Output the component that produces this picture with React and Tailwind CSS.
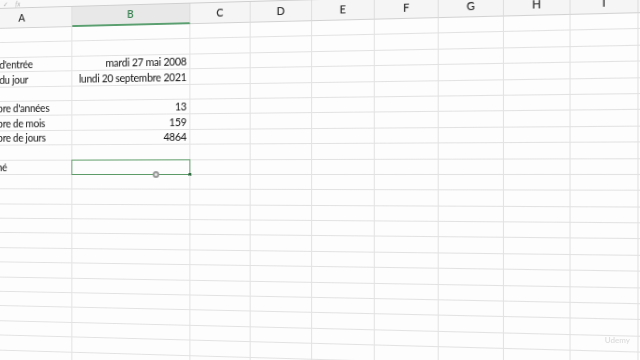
import React from "react";

const cols = [
  { id: "A", w: "w-[111px]" },
  { id: "B", w: "w-[127px]" },
  { id: "C", w: "w-[63px]" },
  { id: "D", w: "w-[63px]" },
  { id: "E", w: "w-[63px]" },
  { id: "F", w: "w-[63px]" },
  { id: "G", w: "w-[63px]" },
  { id: "H", w: "w-[63px]" },
  { id: "I", w: "w-[63px]" },
  { id: "J", w: "w-[63px]" },
];

const data = [
  ["", ""],
  ["", ""],
  ["Date d'entrée", "mardi 27 mai 2008"],
  ["Date du jour", "lundi 20 septembre 2021"],
  ["", ""],
  ["Nombre d'années", "13"],
  ["Nombre de mois", "159"],
  ["Nombre de jours", "4864"],
  ["", ""],
  ["Jour né", "", true],
];

const rows = [...data, ...Array.from({ length: 15 }, () => ["", ""])];

const Row = ({ label, value, selected }) => (
  <div className="flex h-[15.4px]">
    <div className="w-[111px] shrink-0 border-r border-b border-[#e2e2e2] pl-[5px] pb-[1px] flex items-end whitespace-nowrap text-[11px] leading-[12px] tracking-[-0.25px] text-[#111]">
      {label}
    </div>
    <div className="relative w-[127px] shrink-0 border-r border-b border-[#e2e2e2] pr-[3px] pb-[1px] flex items-end justify-end whitespace-nowrap text-[11px] leading-[12px] tracking-[-0.25px] text-[#111]">
      {value}
      {selected && (
        <>
          <div className="absolute -left-px -top-px -right-px -bottom-px border-[1.5px] border-[#5a9a65]" />
          <div className="absolute right-[-2px] bottom-[-2px] w-[3px] h-[3px] bg-[#2e6b40]" />
          <div className="absolute left-[87px] bottom-[-4px] w-[7px] h-[7px] rounded-full border-2 border-[#9a9a9a] bg-[#e8e8e8]" />
        </>
      )}
    </div>
    {cols.slice(2).map((c) => (
      <div key={c.id} className={`${c.w} shrink-0 border-r border-b border-[#e2e2e2]`} />
    ))}
  </div>
);

export default function App() {
  return (
    <div className="relative w-[640px] h-[360px] overflow-hidden bg-[#fdfdfd] [font-family:Lato,'Liberation_Sans',sans-serif]">
      <div className="-ml-[52px] -mt-[9px] w-[742px] origin-[372px_184px] [transform:perspective(1000px)_rotateY(-9deg)]">
        <div className="h-[9px] flex items-center gap-[8px] pl-[34px] bg-[#f8f8f8] border-b border-[#cfcfcf] text-[7px] text-[#b5b5b5]">
          <span>✓</span>
          <span className="italic">fx</span>
        </div>
        <div className="flex h-[21px] bg-[#f5f5f5]">
          {cols.map((c) =>
            c.id === "B" ? (
              <div
                key={c.id}
                className={`${c.w} shrink-0 flex items-center justify-center bg-[#e8e8e8] border-r border-[#dadada] border-b-2 border-b-[#5a9f6f] text-[11px] font-semibold text-[#2f7d4a]`}
              >
                {c.id}
              </div>
            ) : (
              <div
                key={c.id}
                className={`${c.w} shrink-0 flex items-center justify-center border-r border-[#dedede] border-b border-b-[#d2d2d2] text-[11px] font-semibold text-[#333]`}
              >
                {c.id}
              </div>
            )
          )}
        </div>
        {rows.map((r, i) => (
          <Row key={i} label={r[0]} value={r[1]} selected={r[2]} />
        ))}
      </div>
      <div className="absolute right-[10px] bottom-[14px] text-[8px] font-semibold text-[#dcdcdc]">
        Udemy
      </div>
    </div>
  );
}
